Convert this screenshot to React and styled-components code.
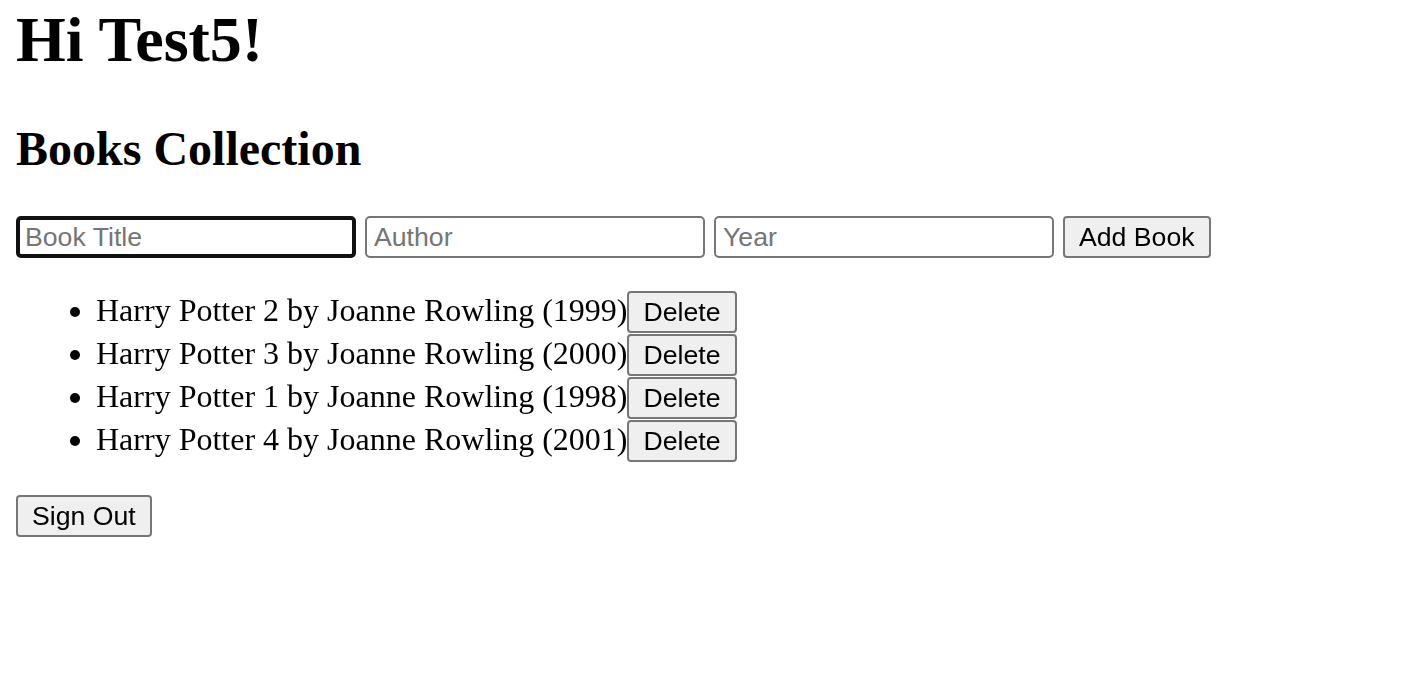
import React from "react";
import styled, { createGlobalStyle } from "styled-components";

const GlobalStyle = createGlobalStyle`
    body {
        margin: 0 16px;
        font-family: "Liberation Serif", "Times New Roman", serif;
        font-size: 32px;
        color: #000;
        background: #fff;
    }
`
const Greeting = styled.h1`
    font-size: 64px;
    font-weight: 700;
    margin: 3px 0 44px;
`
const SectionTitle = styled.h2`
    font-size: 48px;
    font-weight: 700;
    margin: 0 0 40px;
`
const FormRow = styled.div`
    display: flex;
    align-items: center;
    gap: 9px;
`
const TextInput = styled.input`
    box-sizing: border-box;
    width: 340px;
    height: 42px;
    padding: ${(p) => (p.$active ? "0 5px" : "2px 7px")};
    font-family: "Liberation Sans", Arial, sans-serif;
    font-size: 26.67px;
    color: #000;
    background: #fff;
    border: ${(p) => (p.$active ? "4px solid #101010" : "2px solid #767676")};
    border-radius: 5px;
    outline: none;
    &::placeholder {
        color: #757575;
    }
    &:focus-visible {
        outline: none;
    }
`
const Button = styled.button`
    box-sizing: border-box;
    height: 42px;
    padding: 2px 14px;
    font-family: "Liberation Sans", Arial, sans-serif;
    font-size: 26.67px;
    color: #000;
    background: #efefef;
    border: 2px solid #767676;
    border-radius: 4px;
    cursor: pointer;
`
const BookList = styled.ul`
    margin: 33px 0 32px;
    padding-left: 80px;
    list-style: disc;
`
const BookItem = styled.li`
    height: 43px;
    line-height: normal;
`

const books = [
    { title: "Harry Potter 2", author: "Joanne Rowling", year: 1999 },
    { title: "Harry Potter 3", author: "Joanne Rowling", year: 2000 },
    { title: "Harry Potter 1", author: "Joanne Rowling", year: 1998 },
    { title: "Harry Potter 4", author: "Joanne Rowling", year: 2001 },
]

const App = () => {
    return (
        <div>
            <GlobalStyle />
            <Greeting>Hi Test5!</Greeting>
            <SectionTitle>Books Collection</SectionTitle>
            <FormRow>
                <TextInput type="text" placeholder="Book Title" $active autoFocus />
                <TextInput type="text" placeholder="Author" />
                <TextInput type="text" placeholder="Year" />
                <Button>Add Book</Button>
            </FormRow>
            <BookList>
                {books.map((book) => (
                    <BookItem key={book.title}>
                        {book.title} by {book.author} ({book.year})<Button>Delete</Button>
                    </BookItem>
                ))}
            </BookList>
            <Button>Sign Out</Button>
        </div>
    );
}

export default App;
